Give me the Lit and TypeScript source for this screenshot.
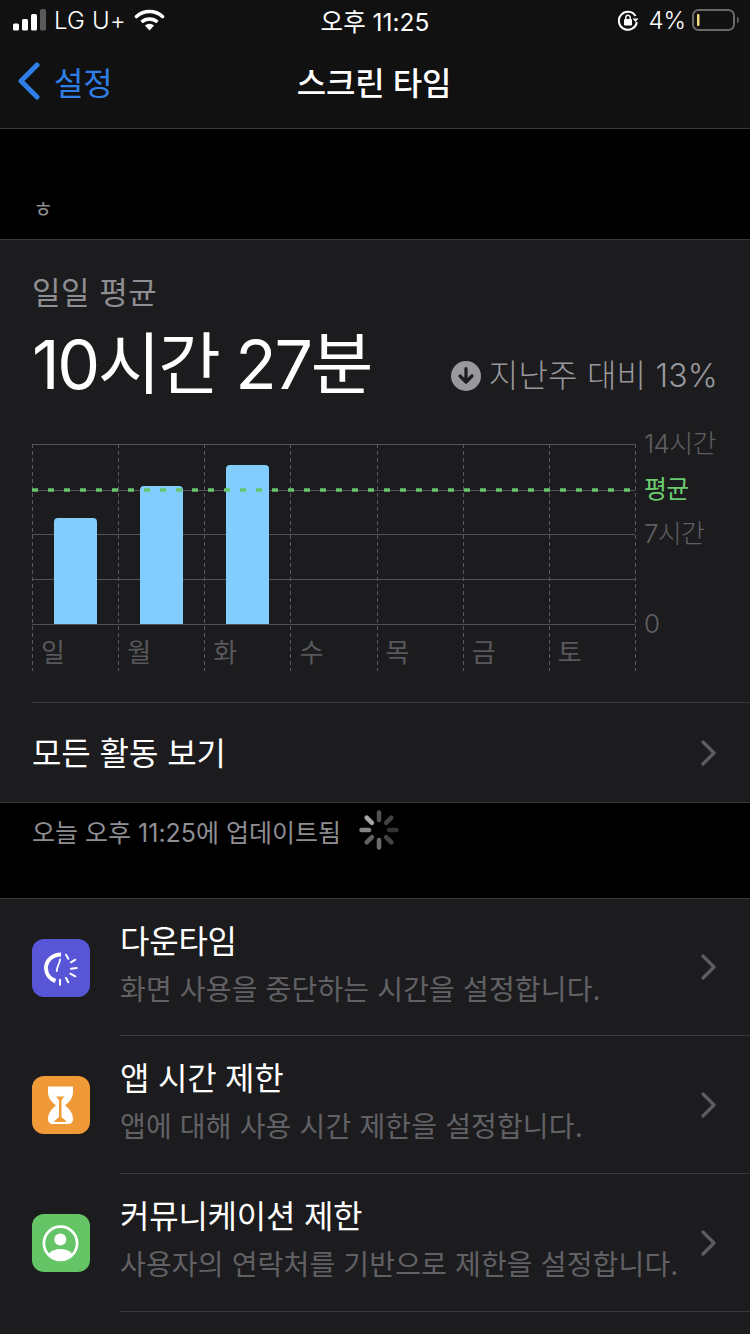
import { LitElement, html, css, svg } from "lit";
import { customElement } from "lit/decorators.js";

const chevron = html`<svg class="chev" width="18" height="28" viewBox="0 0 18 28"><path d="M3 3l11 11L3 25" fill="none" stroke="#5c5c60" stroke-width="3.4" stroke-linecap="round" stroke-linejoin="round"/></svg>`;

const spokes = [
  [0, 0.32], [45, 0.26], [90, 0.2], [135, 0.26], [180, 0.42], [225, 0.38], [270, 0.52], [315, 0.66],
];

const days = [
  { d: "일", h: 106 },
  { d: "월", h: 138 },
  { d: "화", h: 159 },
  { d: "수", h: 0 },
  { d: "목", h: 0 },
  { d: "금", h: 0 },
  { d: "토", h: 0 },
];

const downtimeIcon = html`<svg width="58" height="58" viewBox="0 0 58 58">
  <path d="M29 15.500C20 15.500 14 22 14 29c0 6 4 11 9.500 13" fill="none" stroke="#fff" stroke-width="4"/>
  <path d="M28 20.500c-.2 4-3.300 7-3.300 11.500" fill="none" stroke="#fff" stroke-width="1.800" stroke-linecap="round"/>
  <g stroke="#fff" stroke-width="2" stroke-linecap="round">
    <path d="M34 15.700l2.300 4M43.300 20.700L39 23.300M44.700 29l-5.700.7M43.300 37.300l-5-2.600M36.300 43.300L34 39M28 45.700v-5"/>
  </g>
</svg>`;

const hourglassIcon = html`<svg width="58" height="58" viewBox="0 0 58 58">
  <path fill="#fff" d="M16 10.500h25v5c0 6-3 10-7.500 13.500v1c4.500 3.500 7.500 8 7.500 13 0 3-2 5-5 5H21c-3 0-5-2-5-5 0-5 3-9.500 7.500-13v-1C19 25.500 16 21.500 16 15.500z"/>
  <path fill="#f09a37" d="M24 20.500h8.500l-3 3.500v17l4.500 4v1H22.500v-1l4.500-4V24z"/>
</svg>`;

const personIcon = html`<svg width="58" height="58" viewBox="0 0 58 58">
  <circle cx="28.500" cy="29.300" r="16.600" fill="none" stroke="#fff" stroke-width="2.700"/>
  <circle cx="28.300" cy="25.500" r="6" fill="#fff"/>
  <path fill="#fff" d="M17 39.500c2.500-3 6.500-4.500 11.500-4.500s9 1.500 11.500 4.500c-3 3.500-7 5.500-11.500 5.500s-8.500-2-11.500-5.500z"/>
</svg>`;

@customElement("app-root")
export class AppRoot extends LitElement {
  static styles = css`
    :host {
      display: block;
      width: 750px;
      height: 1334px;
      overflow: hidden;
      background: #000;
      color: #fff;
      font-family: "Inter", "Noto Sans CJK KR", sans-serif;
    }
    .head {
      background: #111112;
      height: 128px;
      border-bottom: 1px solid #3a3a3c;
    }
    .status {
      height: 40px;
      display: flex;
      align-items: center;
      position: relative;
      font-size: 24px;
      padding: 0 11px 0 13px;
    }
    .status .left,
    .status .right {
      display: flex;
      align-items: center;
    }
    .carrier {
      margin: 0 0 0 8px;
      font-weight: 300;
      letter-spacing: 0.200px;
    }
    .wifi {
      margin-left: 8px;
    }
    .time {
      position: absolute;
      left: 0;
      right: 0;
      text-align: center;
      font-size: 24.500px;
      pointer-events: none;
    }
    .right {
      margin-left: auto;
    }
    .pct {
      margin: 0 6px 0 9px;
      font-weight: 300;
    }
    .nav {
      height: 88px;
      position: relative;
      display: flex;
      align-items: center;
      padding: 0 0 6px 18px;
      box-sizing: border-box;
    }
    .back {
      color: #2f7fe6;
      font-size: 32px;
      display: flex;
      align-items: center;
      gap: 14px;
      letter-spacing: -0.300px;
    }
    .title {
      position: absolute;
      left: 0;
      right: 2px;
      top: 0;
      bottom: 6px;
      display: flex;
      align-items: center;
      justify-content: center;
      font-size: 32px;
      font-weight: 500;
      letter-spacing: -0.200px;
    }
    .band {
      height: 110px;
      border-bottom: 1px solid #3a3a3c;
      position: relative;
      padding-left: 33px;
      display: flex;
      align-items: flex-end;
    }
    .band span {
      font-size: 22px;
      line-height: 26px;
      color: #8e8e93;
      padding-bottom: 17px;
    }
    .card {
      background: #1c1c1e;
      height: 562px;
      border-bottom: 1px solid #3a3a3c;
      display: flex;
      flex-direction: column;
      padding-left: 32px;
    }
    .avg-label {
      margin-top: 31px;
      font-size: 31px;
      line-height: 44px;
      color: #8e8e93;
      letter-spacing: 0.500px;
    }
    .total {
      display: flex;
      align-items: flex-end;
      justify-content: space-between;
      padding-right: 32px;
      height: 94px;
    }
    .big {
      font-size: 68px;
      line-height: 90px;
      letter-spacing: -2.300px;
      margin-top: 4px;
    }
    .delta {
      display: flex;
      align-items: center;
      gap: 8px;
      font-size: 32px;
      color: #98989d;
      line-height: 44px;
      padding-bottom: 11px;
      font-weight: 300;
      letter-spacing: 0.200px;
    }
    .chart {
      position: relative;
      margin-top: 35px;
      width: 718px;
      height: 227px;
    }
    .grid,
    .avg-over {
      position: absolute;
      left: 0;
      top: 0;
    }
    .cols {
      position: absolute;
      left: 0;
      top: 0;
      width: 603px;
      height: 227px;
      display: grid;
      grid-template-columns: repeat(7, 1fr);
    }
    .col {
      display: flex;
      flex-direction: column;
    }
    .plot {
      height: 180px;
      display: flex;
      align-items: flex-end;
      padding-left: 22px;
    }
    .bar {
      width: 43px;
      background: #81cdfd;
      border-radius: 4px 4px 0 0;
    }
    .day {
      padding: 11px 0 0 9px;
      font-size: 26px;
      line-height: 36px;
      color: #58585c;
    }
    .axis {
      position: absolute;
      left: 612px;
      top: 0;
      font-size: 26px;
      line-height: 36px;
      color: #5f5f63;
      letter-spacing: -0.700px;
      font-weight: 300;
      white-space: nowrap;
      transform: translateY(-18px);
    }
    .axis.g {
      color: #6ccb6f;
      font-size: 25px;
      font-weight: 400;
    }
    .all {
      margin-top: 31px;
      height: 99px;
      border-top: 1px solid #3a3a3c;
      display: flex;
      align-items: center;
      justify-content: space-between;
      padding-right: 32px;
      font-size: 32px;
    }
    .all span {
      padding-bottom: 3px;
      letter-spacing: -0.100px;
    }
    .upd {
      height: 95px;
      box-sizing: border-box;
      padding: 12px 0 0 32px;
      display: flex;
      align-items: flex-start;
      gap: 18px;
      font-size: 25px;
      line-height: 36px;
      color: #8e8e93;
    }
    .upd svg {
      margin-top: -5px;
    }
    .list {
      background: #1c1c1e;
      border-top: 1px solid #3a3a3c;
      height: 436px;
    }
    .row {
      display: flex;
      padding-left: 32px;
      gap: 30px;
      align-items: center;
    }
    .row .icon {
      width: 58px;
      height: 58px;
      border-radius: 12px;
      flex: none;
      overflow: hidden;
    }
    .body {
      flex: 1;
      height: 137px;
      border-bottom: 1px solid #3a3a3c;
      display: flex;
      align-items: center;
      padding-right: 32px;
    }
    .row:first-child .body {
      height: 136px;
    }
    .text {
      flex: 1;
      padding-bottom: 5px;
    }
    .t1 {
      font-size: 32px;
      line-height: 44px;
      letter-spacing: -0.250px;
    }
    .t2 {
      font-size: 28px;
      line-height: 40px;
      margin-top: 6px;
      color: #616165;
      letter-spacing: 0.150px;
      white-space: nowrap;
    }
  `;

  render() {
    const w = 603;
    const xs = [0, 86, 172, 258, 345, 431, 517, 603];
    const ys = [0.5, 90.5, 135.5, 180.5];
    return html`
      <div class="head">
        <div class="status">
          <div class="left">
            <svg width="33" height="22" viewBox="0 0 33 22">
              <rect x="0" y="14.500" width="6" height="7" rx="1.500" fill="#fff"/>
              <rect x="9" y="10" width="6" height="11.500" rx="1.500" fill="#fff"/>
              <rect x="18" y="5" width="6" height="16.500" rx="1.500" fill="#fff"/>
              <rect x="27" y="0" width="6" height="21.500" rx="1.500" fill="#5a5a5c"/>
            </svg>
            <span class="carrier">LG U+</span>
            <svg class="wifi" width="31" height="22" viewBox="0 0 31 22">
              <path d="M15.500 21.500l-4.600-5a7 7 0 0 1 9.200 0z" fill="#fff"/>
              <path d="M7.500 13a12 12 0 0 1 16 0" fill="none" stroke="#fff" stroke-width="3.400"/>
              <path d="M2.500 7.500a19.500 19.500 0 0 1 26 0" fill="none" stroke="#fff" stroke-width="3.600" stroke-linecap="round"/>
            </svg>
          </div>
          <div class="time">오후 11:25</div>
          <div class="right">
            <svg width="21" height="21" viewBox="0 0 21 21">
              <path d="M17.500 6A9 9 0 1 0 18.800 12" fill="none" stroke="#fff" stroke-width="2"/>
              <path d="M14.500 8.500h6l-3 3.500z" fill="#fff"/>
              <rect x="6" y="9" width="8" height="6.500" rx="1" fill="#fff"/>
              <path d="M7.800 9.500V7.500a2.200 2.200 0 0 1 4.400 0v2" fill="none" stroke="#fff" stroke-width="1.500"/>
            </svg>
            <span class="pct">4%</span>
            <svg width="47" height="22" viewBox="0 0 47 22">
              <rect x="1" y="1" width="41" height="20" rx="5.500" fill="none" stroke="#69696b" stroke-width="2"/>
              <rect x="5" y="5" width="2.500" height="12" rx="1" fill="#f0dc7a"/>
              <path d="M45 7.500c1.300.6 2 2 2 3.500s-.7 2.900-2 3.500z" fill="#5c5c5e"/>
            </svg>
          </div>
        </div>
        <div class="nav">
          <div class="back">
            <svg width="22" height="38" viewBox="0 0 22 38"><path d="M19 3L3 19l16 16" fill="none" stroke="#2f7fe6" stroke-width="5" stroke-linecap="round" stroke-linejoin="round"/></svg>
            <span>설정</span>
          </div>
          <div class="title">스크린 타임</div>
        </div>
      </div>

      <div class="band"><span>ㅎ</span></div>

      <div class="card">
        <div class="avg-label">일일 평균</div>
        <div class="total">
          <div class="big">10시간 27분</div>
          <div class="delta">
            <svg width="30" height="30" viewBox="0 0 30 30">
              <circle cx="15" cy="15" r="15" fill="#98989d"/>
              <path d="M15 7.500v13M9 15l6 6 6-6" fill="none" stroke="#1c1c1e" stroke-width="3.200" stroke-linecap="round" stroke-linejoin="round"/>
            </svg>
            <span>지난주 대비 13%</span>
          </div>
        </div>
        <div class="chart">
          <svg class="grid" width="605" height="228" viewBox="0 0 605 228">
            ${[...ys, 46.5].map(
              (y) => svg`<line x1="0" x2=${w} y1=${y} y2=${y} stroke="#545456" stroke-width="1"/>`
            )}
            ${xs.map(
              (x) => svg`<line x1=${x + 0.5} x2=${x + 0.5} y1="0" y2="227" stroke="#59595b" stroke-width="1" stroke-dasharray="4 3"/>`
            )}
          </svg>
          <div class="cols">
            ${days.map(
              (d) => html`<div class="col">
                <div class="plot">
                  ${d.h
                    ? html`<div class="bar" style="height:${d.h}px"></div>`
                    : ""}
                </div>
                <div class="day">${d.d}</div>
              </div>`
            )}
          </div>
          <svg class="avg-over" width="605" height="60" viewBox="0 0 605 60">
            <line x1="0" x2="603" y1="46" y2="46" stroke="#68c56c" stroke-width="3.400" stroke-dasharray="6 10"/>
          </svg>
          <div class="axis" style="top:0px">14시간</div>
          <div class="axis g" style="top:45px">평균</div>
          <div class="axis" style="top:90px">7시간</div>
          <div class="axis" style="top:180px">0</div>
        </div>
        <div class="all">
          <span>모든 활동 보기</span>
          ${chevron}
        </div>
      </div>

      <div class="upd">
        <span>오늘 오후 11:25에 업데이트됨</span>
        <svg width="40" height="40" viewBox="-20 -20 40 40">
          ${spokes.map(
            ([a, o]) => svg`<line x1="0" y1="-10" x2="0" y2="-17.500" transform="rotate(${a})" stroke="#fff" stroke-opacity=${o} stroke-width="4.500" stroke-linecap="round"/>`
          )}
        </svg>
      </div>

      <div class="list">
        ${this.row("#5856d6", downtimeIcon, "다운타임", "화면 사용을 중단하는 시간을 설정합니다.")}
        ${this.row("#f09a37", hourglassIcon, "앱 시간 제한", "앱에 대해 사용 시간 제한을 설정합니다.")}
        ${this.row("#65c466", personIcon, "커뮤니케이션 제한", "사용자의 연락처를 기반으로 제한을 설정합니다.")}
      </div>
    `;
  }

  private row(bg: string, icon: unknown, t1: string, t2: string) {
    return html`<div class="row">
      <div class="icon" style="background:${bg}">${icon}</div>
      <div class="body">
        <div class="text">
          <div class="t1">${t1}</div>
          <div class="t2">${t2}</div>
        </div>
        ${chevron}
      </div>
    </div>`;
  }
}
